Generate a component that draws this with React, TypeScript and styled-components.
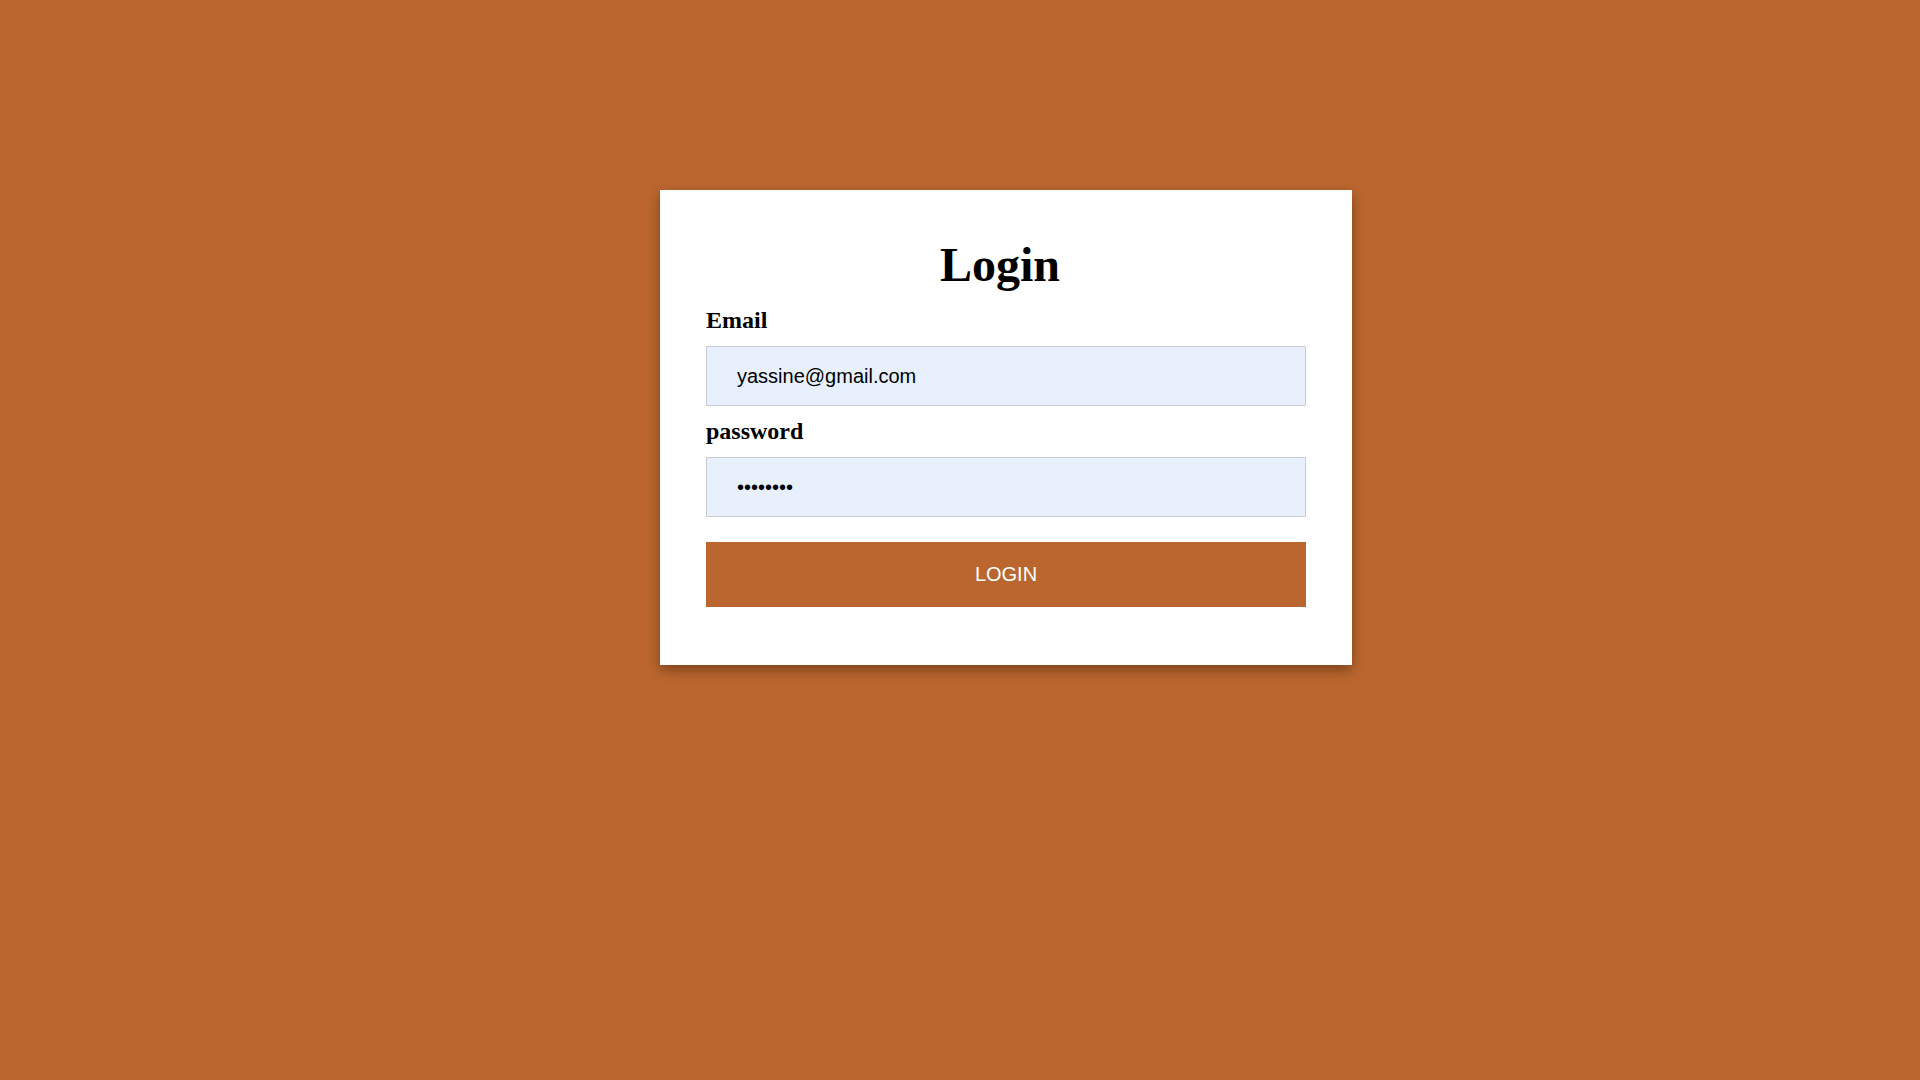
import React from "react";
import styled, { createGlobalStyle } from "styled-components";

const Global = createGlobalStyle`
  html, body {
    margin: 0;
    padding: 0;
    background: #bb662e;
    font-family: "Liberation Serif", "Times New Roman", serif;
  }
  * { box-sizing: border-box; }
`;

const Page = styled.div`
  min-height: 1080px;
  display: flex;
  justify-content: center;
  align-items: flex-start;
  padding-top: 190px;
  padding-left: 92px;
  background: #bb662e;
`;

const Card = styled.form`
  width: 692px;
  background: #ffffff;
  padding: 46px 46px 58px;
  display: flex;
  flex-direction: column;
  box-shadow: 0 5px 12px rgba(0, 0, 0, 0.35);
`;

const Title = styled.h1`
  margin: 1px 12px 15px 0;
  font-family: "Liberation Serif", "Times New Roman", serif;
  font-size: 48px;
  font-weight: bold;
  text-align: center;
  color: #000;
  line-height: normal;
`;

const Label = styled.label`
  display: block;
  font-family: "Liberation Serif", "Times New Roman", serif;
  font-size: 24px;
  font-weight: bold;
  color: #000;
  line-height: normal;
  margin-bottom: 12px;
`;

const Input = styled.input<{ $last?: boolean }>`
  width: 100%;
  height: 60px;
  padding: 0 30px;
  border: 1px solid #c9ccd1;
  background: #e8f0fe;
  font-family: "Liberation Sans", Arial, sans-serif;
  font-size: 20px;
  color: #000;
  outline: none;
  margin-bottom: ${(p) => (p.$last ? "25px" : "12px")};
`;

const Button = styled.button`
  width: 100%;
  height: 65px;
  border: none;
  background: #bb662e;
  color: #ffffff;
  font-family: "Liberation Sans", Arial, sans-serif;
  font-size: 20px;
  text-transform: uppercase;
  cursor: pointer;
`;

export default function App() {
  return (
    <>
      <Global />
      <Page>
        <Card onSubmit={(e) => e.preventDefault()}>
          <Title>Login</Title>
          <Label htmlFor="email">Email</Label>
          <Input id="email" type="email" defaultValue="yassine@gmail.com" />
          <Label htmlFor="password">password</Label>
          <Input id="password" type="password" defaultValue="12345678" $last />
          <Button type="submit">Login</Button>
        </Card>
      </Page>
    </>
  );
}
